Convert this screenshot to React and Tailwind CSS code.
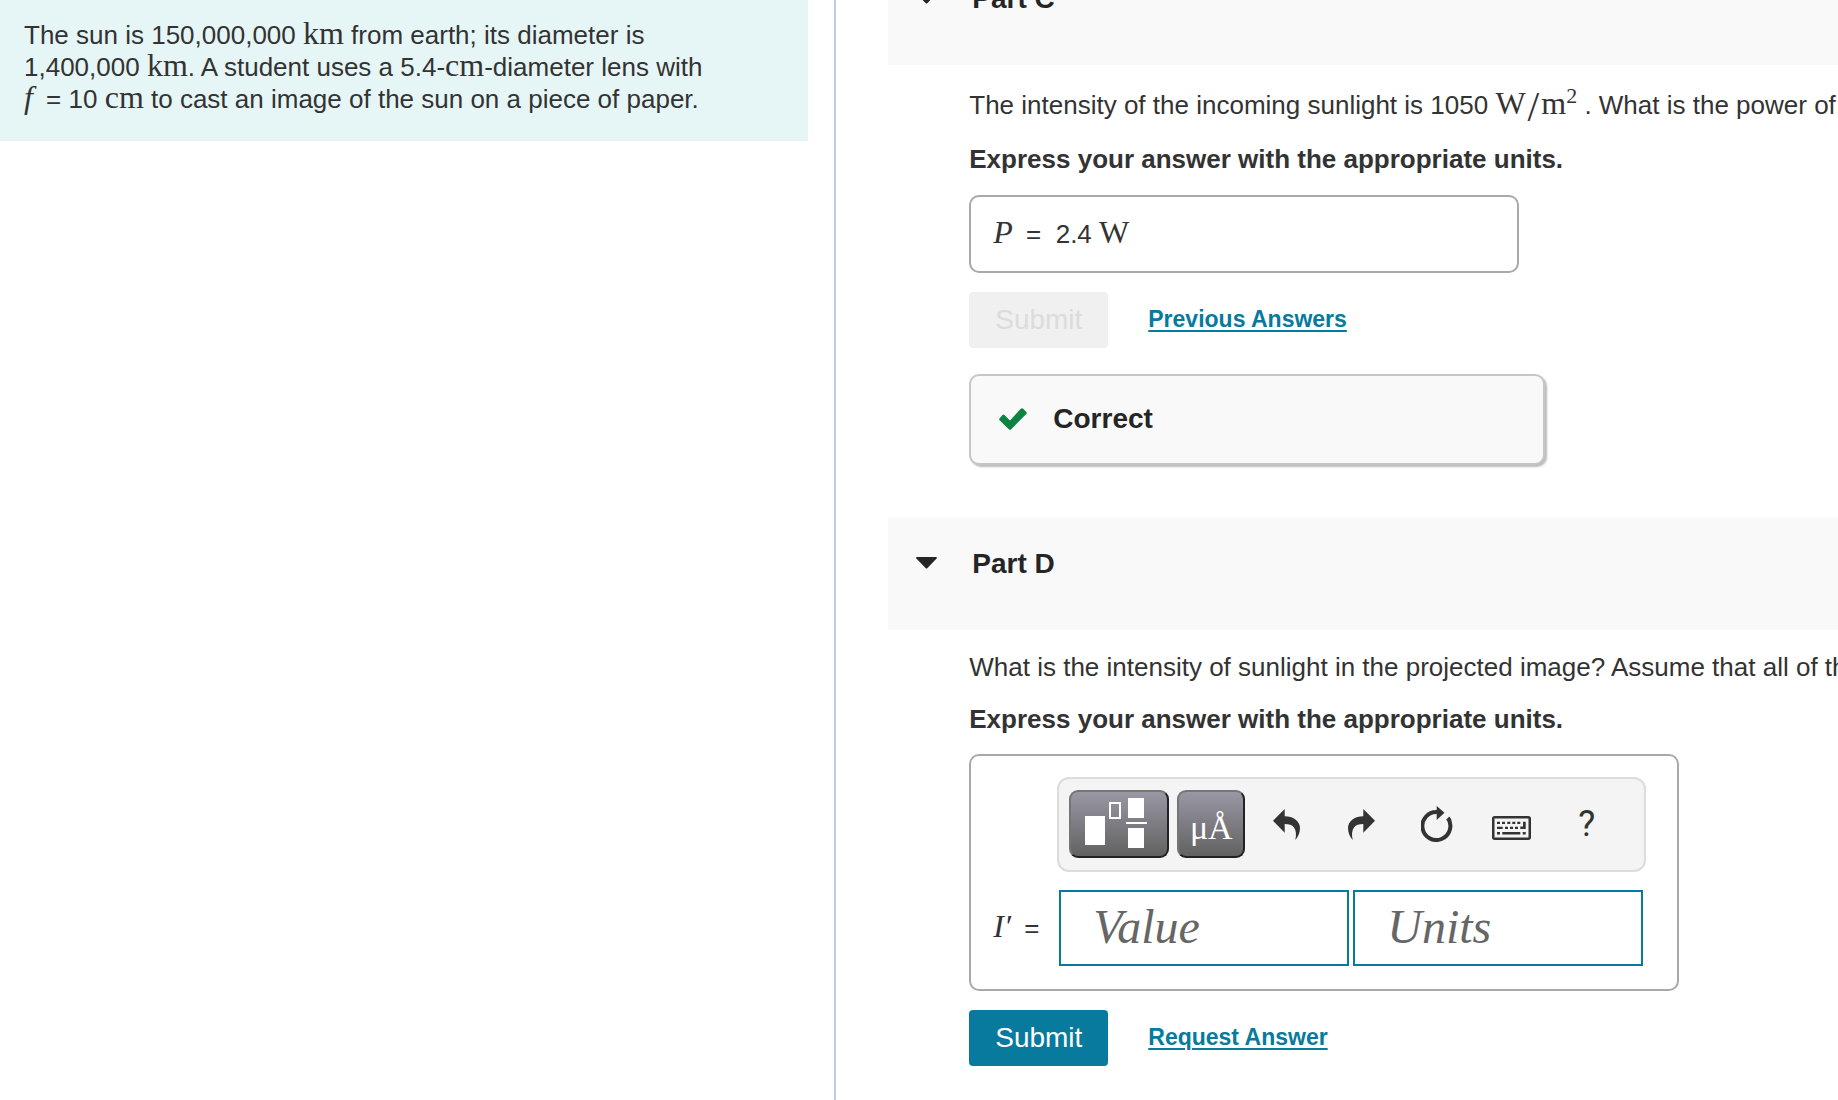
import React from "react";

// inline math, set in a serif face without changing the line height
const Math = ({ italic, children }) => (
  <span
    className={`font-['Liberation_Serif',serif] text-[32px] leading-[0] ${italic ? "mr-[6px] italic" : ""}`}
  >
    {children}
  </span>
);

const PartHeader = ({ title }) => (
  <header className="bg-[#f9f9f9] pt-[31px] pb-[50px] pl-7">
    <button
      type="button"
      aria-expanded="true"
      className="flex items-center gap-[35px] text-[#252525]"
    >
      <svg width="21" height="14" viewBox="0 0 21 14" aria-hidden="true">
        <path d="M1 0h19q1.500.5.6 1.500L11.500 11q-1 1-2 0L.4 1.500Q-.5.5 1 0Z" fill="currentColor" />
      </svg>
      <h2 className="text-[28px] leading-8 font-bold">{title}</h2>
    </button>
  </header>
);

const Instructions = () => (
  <p className="mt-5 text-[26px] leading-8 font-bold">
    Express your answer with the appropriate units.
  </p>
);

const SubmitRow = ({ disabled, link }) => (
  <div className="mt-[19px] flex items-center gap-10">
    <button
      type="button"
      disabled={disabled}
      className="h-14 w-[139px] rounded-[4px] bg-[#077a9d] text-[28px] text-white disabled:bg-[#f0f0f0] disabled:text-[#dcdcdc]"
    >
      Submit
    </button>
    <a
      href="#answers"
      className="pb-[3px] text-[23px] leading-8 font-bold text-[#077a9d] underline decoration-2 underline-offset-3"
    >
      {link}
    </a>
  </div>
);

const UndoIcon = () => (
  <svg width="27" height="31" viewBox="0 0 27 31" fill="currentColor">
    <path d="M0 11.700 11.700 0v7.300C20 7.300 27 12 27 19c0 5-2 9-4.700 12 1.200-5 .9-9.500-1.300-12.500-1.800-2.600-5-3.500-9.300-3.500v8.700Z" />
  </svg>
);

const RedoIcon = () => (
  <svg width="27" height="31" viewBox="0 0 27 31" fill="currentColor">
    <path d="M27 11.700 15.300 0v7.300C7 7.300 0 12 0 19c0 5 2 9 4.700 12-1.200-5-.9-9.500 1.300-12.500 1.800-2.600 5-3.500 9.300-3.500v8.700Z" />
  </svg>
);

const ResetIcon = () => (
  <svg width="32" height="36" viewBox="0 0 32 36">
    <path d="M27 12.200A14 14 0 1 1 16 6" fill="none" stroke="currentColor" strokeWidth="4" />
    <path d="M15.700 0 23.500 6.800 15.700 14Z" fill="currentColor" />
    <path d="M25.300 14.200 28.300 10.500 30.500 14Z" fill="currentColor" />
  </svg>
);

const KeyboardIcon = () => (
  <svg width="39" height="24" viewBox="0 0 39 24">
    <rect x="1.250" y="1.250" width="36.500" height="21.500" rx="1.500" fill="none" stroke="currentColor" strokeWidth="2.500" />
    <path
      d="M5 5.700h3v2.400H5zM10 5.700h3v2.400h-3zM15.300 5.700h3v2.400h-3zM20.300 5.700h3v2.400h-3zM25.300 5.700h3v2.400h-3zM31 5.700h2.700V13h-5.400v-2.400H31zM5 10.700h5.700V13H5zM13 10.700h3V13h-3zM18 10.700h3V13h-3zM23 10.700h3V13h-3zM5 16h3v2.400H5zM10.300 16h18v2.400h-18zM30.700 16h3v2.400h-3z"
      fill="currentColor"
    />
  </svg>
);

const TemplatesIcon = () => (
  <svg width="96" height="64" viewBox="2 2 96 64" fill="#fff" className="shrink-0">
    <rect x="16" y="26" width="20" height="29" />
    <rect x="41" y="13" width="10" height="15" fill="none" stroke="#fff" strokeWidth="2" />
    <rect x="59" y="8" width="16" height="20" />
    <rect x="57" y="32" width="21" height="2" />
    <rect x="59" y="38" width="16" height="20" />
  </svg>
);

const tools = [
  { label: "Undo", icon: <UndoIcon /> },
  { label: "Redo", icon: <RedoIcon /> },
  { label: "Reset", icon: <ResetIcon /> },
  { label: "Keyboard shortcuts", icon: <div className="pt-2"><KeyboardIcon /></div> },
  { label: "Help", icon: <span className="font-[Roboto,sans-serif] text-4xl">?</span> },
];

const darkButton =
  "flex h-[68px] items-center justify-center rounded-[9px] border-2 border-t-[#767676] border-l-[#767676] border-r-[#222] border-b-[#222] bg-linear-to-b from-[#9a97a4] to-[#626262] text-white";

const Toolbar = () => (
  <div className="ml-[86px] flex w-[589px] items-center rounded-xl border-2 border-[#dcdcdc] bg-[#f4f4f4] pt-[11px] pb-3 pl-[10px]">
    <button type="button" aria-label="Templates" className={`${darkButton} w-[100px]`}>
      <TemplatesIcon />
    </button>
    <button
      type="button"
      aria-label="Units"
      className={`${darkButton} ml-2 w-[68px] pt-2 font-['Liberation_Serif',serif] text-[34px]`}
    >
      μÅ
    </button>
    <div className="ml-1 flex">
      {tools.map((tool) => (
        <button
          key={tool.label}
          type="button"
          aria-label={tool.label}
          className="flex h-[68px] w-[75px] items-center justify-center text-[#333]"
        >
          {tool.icon}
        </button>
      ))}
    </div>
  </div>
);

const field =
  "h-[76px] w-[290px] border-2 border-[#077a9d] px-8 pb-1 font-['Liberation_Serif',serif] text-[48px] italic text-[#333] placeholder:text-[#666]";

const App = () => {
  return (
    <div className="flex h-screen overflow-hidden bg-white font-['Liberation_Sans',Arial,sans-serif] text-[26px] leading-8 text-[#333]">
      <aside className="w-[45.5%] shrink-0 border-r-2 border-[#bccddf] pr-[26px]">
        <p className="bg-[#e6f6f6] pt-[19px] pr-16 pb-[26px] pl-6">
          The sun is 150,000,000 <Math>km</Math> from earth; its diameter is{" "}
          <span className="whitespace-nowrap">
            1,400,000 <Math>km</Math>.
          </span>{" "}
          A student uses a 5.4-<Math>cm</Math>-diameter lens with{" "}
          <span className="whitespace-nowrap">
            <Math italic>f</Math> = 10 <Math>cm</Math>
          </span>{" "}
          to cast an image of the sun on a piece of paper.
        </p>
      </aside>

      <main className="-mt-12 min-w-0 flex-1 overflow-hidden pl-[52px]">
        <section>
          <PartHeader title="Part C" />
          <div className="pt-[22px] pb-[52px] pl-[81px]">
            <p className="leading-9 whitespace-nowrap">
              The intensity of the incoming sunlight is 1050{" "}
              <Math>
                W<span className="mx-[2px] align-sub text-[42px]">/</span>m
                <sup className="text-[22px] leading-[0]">2</sup>
              </Math>{" "}
              . What is the power of
            </p>
            <Instructions />
            <div className="mt-5 flex h-[78px] w-[550px] max-w-full items-center rounded-[10px] border-2 border-[#a9a9a9] pl-[22px]">
              <p className="whitespace-pre">
                <Math italic>P</Math> =  2.4 <Math>W</Math>
              </p>
            </div>
            <SubmitRow disabled link="Previous Answers" />
            <div className="mt-[26px] flex h-[91px] w-[576px] max-w-full items-center gap-[26px] rounded-[10px] border-2 border-[#c6c6c6] bg-[#f9f9f9] pb-[2px] pl-7 shadow-[2px_2px_2px_#bbb]">
              <svg width="28" height="22" viewBox="0 0 28 22" aria-hidden="true">
                <path
                  d="M.5 10.500 3.500 7Q4.500 6 5.500 7L11 12.500 21.800.8Q23-.4 24.200.8L27.300 4Q28.200 5 27.300 6L12.200 21.200Q11 22.300 9.800 21.200L.6 12.300Q-.3 11.400.5 10.500Z"
                  fill="#0a8440"
                />
              </svg>
              <strong className="text-[28px] text-[#252525]">Correct</strong>
            </div>
          </div>
        </section>

        <section>
          <PartHeader title="Part D" />
          <div className="pt-[21px] pl-[81px]">
            <p className="whitespace-nowrap">
              What is the intensity of sunlight in the projected image? Assume that all of the
            </p>
            <Instructions />
            <div className="mt-[19px] w-[710px] rounded-[10px] border-2 border-[#a9a9a9] pt-[21px] pb-[23px]">
              <Toolbar />
              <div className="mt-[18px] flex items-center">
                <label htmlFor="value" className="w-[88px] shrink-0 pl-[22px] whitespace-nowrap">
                  <Math italic>I′</Math> =
                </label>
                <input id="value" type="text" placeholder="Value" className={field} />
                <input
                  type="text"
                  aria-label="Units"
                  placeholder="Units"
                  className={`${field} ml-1`}
                />
              </div>
            </div>
            <SubmitRow link="Request Answer" />
          </div>
        </section>
      </main>
    </div>
  );
};

export default App;
